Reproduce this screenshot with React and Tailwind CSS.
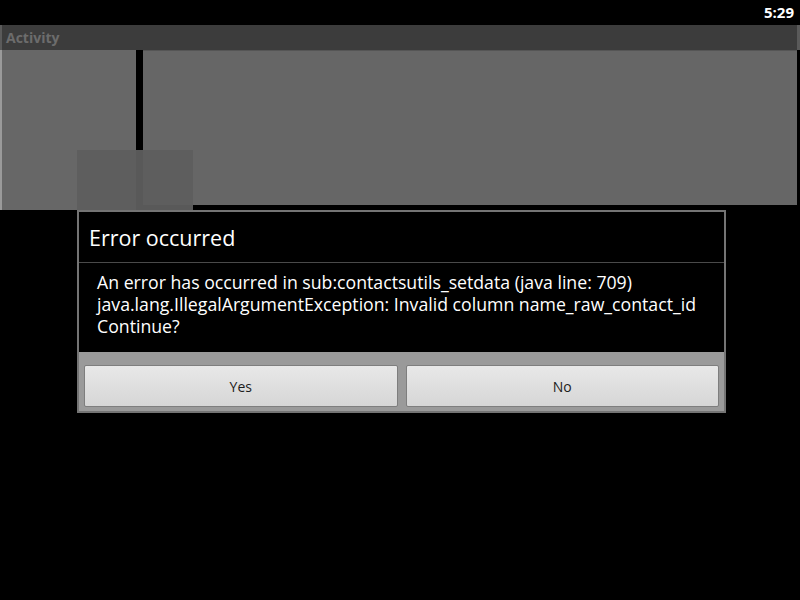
export default function App() {
  return (
    <div className="relative flex h-[600px] w-[800px] flex-col overflow-hidden bg-black font-['Open_Sans',sans-serif]">
      {/* status bar */}
      <div className="flex h-[25px] items-center justify-end pr-[6px] text-[15px] font-bold text-white">5:29</div>

      {/* title bar */}
      <div className="flex h-[25px] items-center border-l-2 border-r-[3px] border-[#5a5a5a] bg-[#3c3c3c] pl-[4px] text-[14px] font-bold text-[#6c6c6c]">
        Activity
      </div>

      {/* activity content */}
      <div className="relative flex h-[160px]">
        <div className="h-[160px] w-[136px] border-l-2 border-[#9a9a9a] bg-[#676767]" />
        <div className="w-[7px]" />
        <div className="mr-[3px] h-[155px] flex-1 border-t border-[#555] bg-[#666]" />
        <div className="absolute left-[77px] top-[100px] h-[60px] w-[116px] bg-[#5e5e5e]/95" />
      </div>

      {/* dialog */}
      <div className="ml-[77px] flex h-[203px] w-[649px] flex-col border-2 border-[#747474] bg-black">
        <div className="flex h-[50px] items-center pl-[10px] pt-[3px] text-[21.5px] text-white">Error occurred</div>
        <div className="h-px bg-[#4a4a4a]" />
        <div className="h-[89px] pl-[18px] pt-[8px] text-[17.7px] leading-[22px] text-white">
          <p>An error has occurred in sub:contactsutils_setdata (java line: 709)</p>
          <p>java.lang.IllegalArgumentException: Invalid column name_raw_contact_id</p>
          <p>Continue?</p>
        </div>
        <div className="flex flex-1 gap-[8px] bg-[#9a9a9a] px-[5px] pb-[3px] pt-[13px]">
          <button className="flex h-[42px] flex-1 items-center justify-center rounded-[2px] border border-[#7e7e7e] bg-gradient-to-b from-[#e8e8e8] to-[#d6d6d6] text-[14px] text-[#1c1c1c]">
            Yes
          </button>
          <button className="flex h-[42px] flex-1 items-center justify-center rounded-[2px] border border-[#7e7e7e] bg-gradient-to-b from-[#e8e8e8] to-[#d6d6d6] text-[14px] text-[#1c1c1c]">
            No
          </button>
        </div>
      </div>
    </div>
  )
}
